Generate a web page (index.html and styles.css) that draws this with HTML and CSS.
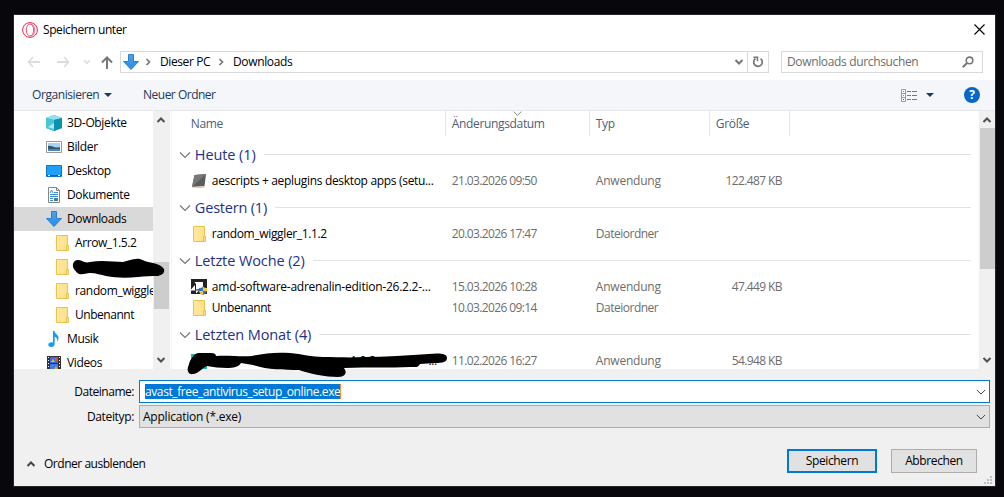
FILE: index.html
```html
<!DOCTYPE html>
<html lang="de">
<head>
<meta charset="utf-8">
<title>Speichern unter</title>
<link rel="stylesheet" href="styles.css">
</head>
<body>
<svg class="defs" width="0" height="0">
  <defs>
    <linearGradient id="arrowFill" x2="0" y2="1"><stop offset="0" stop-color="#4aa3ec"/><stop offset="1" stop-color="#2b8ce4"/></linearGradient>
    <linearGradient id="folderFill"><stop offset="0" stop-color="#ffe9a3"/><stop offset="1" stop-color="#ffdf82"/></linearGradient>
    <symbol id="folder" viewBox="0 0 16 16"><path d="M2.500.5h11v10h1v5h-12z" fill="url(#folderFill)" stroke="#ebc24d"/><path d="M12.500 15v-4.500h1.500" fill="none" stroke="#ebc24d"/></symbol>
    <symbol id="down" viewBox="0 0 16 16"><path d="M5.500.5h5v7h5L8 15.500.5 7.500h5z" fill="url(#arrowFill)" stroke="#2b7ed0"/></symbol>
    <symbol id="chev" viewBox="0 0 12 12"><path d="M1 3.500 6 8.500 11 3.500" fill="none" stroke="currentColor" stroke-width="1.200"/></symbol>
    <symbol id="boldchev" viewBox="0 0 10 10"><path d="M1.500 3 5 6.500 8.500 3" fill="none" stroke="currentColor" stroke-width="2"/></symbol>
  </defs>
</svg>
<div class="window">
  <header class="titlebar">
    <svg class="i16" viewBox="0 0 16 16" fill="none" stroke="#e9204f"><circle cx="8" cy="8" r="7.400" stroke-width="1"/><ellipse cx="8" cy="8" rx="3.700" ry="6" stroke-width=".8"/><path d="M9 2c5 1 5 11 0 12" stroke-width=".6"/></svg>
    <span class="title">Speichern unter</span>
    <svg class="close" viewBox="0 0 11 11"><path d="m.5.5 10 10m0-10-10 10" stroke="#000" stroke-width="1.100"/></svg>
  </header>

  <nav class="navbar">
    <div class="arrows">
      <svg width="13" height="12" viewBox="0 0 13 12"><path d="M6 1 1.500 6 6 11M1.500 6H13" fill="none" stroke="#ddd" stroke-width="1.800"/></svg>
      <svg width="13" height="12" viewBox="0 0 13 12"><path d="m7 1 4.500 5L7 11M11.500 6H0" fill="none" stroke="#ddd" stroke-width="1.800"/></svg>
      <svg class="recent" width="8" height="8" viewBox="0 0 10 10"><use href="#boldchev"/></svg>
      <svg width="12" height="13" viewBox="0 0 12 13"><path d="M1 6.500 6 1.500l5 5M6 1.500V13" fill="none" stroke="#777" stroke-width="2"/></svg>
    </div>
    <div class="address">
      <svg class="i16"><use href="#down"/></svg>
      <svg class="sep" viewBox="0 0 6 8"><path d="m1.500 1 3 3-3 3" fill="none" stroke="#777" stroke-width="1.700"/></svg>
      <span class="crumb pc">Dieser PC</span>
      <svg class="sep second" viewBox="0 0 6 8"><path d="m1.500 1 3 3-3 3" fill="none" stroke="#777" stroke-width="1.700"/></svg>
      <span class="crumb dl">Downloads</span>
      <svg class="drop" viewBox="0 0 10 10"><use href="#boldchev"/></svg>
      <span class="refresh"><svg width="12" height="12" viewBox="0 0 12 12"><path d="M8.600 2.600A4.300 4.300 0 1 1 3.500 2.500" fill="none" stroke="#777" stroke-width="1.700"/><path d="M1.500 1.200h4v4" fill="none" stroke="#777" stroke-width="1.500"/></svg></span>
    </div>
    <div class="search">
      <span class="hint">Downloads durchsuchen</span>
      <svg width="12" height="12" viewBox="0 0 12 12"><circle cx="7.500" cy="4.400" r="3.300" fill="none" stroke="#777" stroke-width="1.600"/><path d="M5.200 6.800.8 11.200" stroke="#777" stroke-width="2"/></svg>
    </div>
  </nav>

  <div class="toolbar">
    <span class="organize">Organisieren</span>
    <i class="tri"></i>
    <span class="newfolder">Neuer Ordner</span>
    <svg class="view" width="16" height="13" viewBox="0 0 16 13"><path d="M.5.500h4v12h-4zM.5 4.500h4m-4 4h4" fill="#fff" stroke="#999"/><path d="M6 2.500h4m1 0h5m-10 4h4m1 0h5m-10 4h4m1 0h5" stroke="#777"/><path d="M2 2h1v1H2z" fill="#777"/><path d="M2 6h1v1H2z" fill="#39f"/><path d="M2 10h1v1H2z" fill="#d22"/></svg>
    <i class="tri"></i>
    <span class="help">?</span>
  </div>

  <main class="content">
    <aside class="tree">
      <div class="node"><svg class="i16" viewBox="0 0 16 16"><path d="M0 3 8 0l8 3v10l-8 3-8-3z" fill="#2bb3c9"/><path d="m0 3 8-3 8 3-8 2z" fill="#8fe3ef"/><path d="M0 3l8 2v11l-8-3z" fill="#48c5d6"/><path d="m8 5 8-2v10l-8 3z" fill="#0c91b0"/><path d="m8 8-6 4 6 2z" fill="#a9edf4"/></svg><span>3D-Objekte</span></div>
      <div class="node"><svg class="i16" viewBox="0 0 16 16"><path d="M.5 2.500h15v11H.5z" fill="#fff" stroke="#999"/><path d="M2 4h12v8H2z" fill="#a7d2f3"/><path d="M2 7c4-1 6 3 12 1v4H2z" fill="#35566a"/><path d="M2 10h12v2H2z" fill="#4d86be"/></svg><span>Bilder</span></div>
      <div class="node"><svg class="i16" viewBox="0 0 16 16"><path d="M.5 2.500h15v11H.5z" fill="#1ca0fb" stroke="#0c76c4"/><path d="M1 12.500h14" stroke="#0b5e9d"/><path d="M2 12.500h2m8 0h2" stroke="#fff"/></svg><span>Desktop</span></div>
      <div class="node"><svg class="i16" viewBox="0 0 16 16"><path d="M2.500.5h8l3 3v12h-11z" fill="#fff" stroke="#858585"/><path d="M10.500.5v3h3" fill="none" stroke="#858585"/><path d="m4 6 1.500-3L7 6M8 5.500h4m-8 2h8m-8 2h8m-8 2h3m-3 2h3" fill="none" stroke="#398cce"/><path d="M8 11h4v3H8z" fill="#4d7b91"/></svg><span>Dokumente</span></div>
      <div class="node selected"><svg class="i16"><use href="#down"/></svg><span>Downloads</span></div>
      <div class="node child"><svg class="i16"><use href="#folder"/></svg><span class="arrow">Arrow_1.5.2</span></div>
      <div class="node child"><svg class="i16"><use href="#folder"/></svg></div>
      <div class="node child"><svg class="i16"><use href="#folder"/></svg><span>random_wiggler</span></div>
      <div class="node child"><svg class="i16"><use href="#folder"/></svg><span class="dense">Unbenannt</span></div>
      <div class="node"><svg class="i16" viewBox="0 0 16 16"><path d="M7 0h1.500c.3 3 4.500 3.700 4 7.500-.2 1.500-.8 2.200-1.500 3 .7-3-.7-4.300-2.300-4.700V13c0 1.700-1.500 3-3.300 3S2.300 15 2.300 13.700 4 11 5.600 11.200L7 11.500z" fill="#159df2"/></svg><span>Musik</span></div>
      <div class="node"><svg class="i16" viewBox="0 0 16 16"><path d="M1 1h14v15H1z" fill="#333"/><path d="M4 2h8v6H4z" fill="#3c6ae0"/><path d="M4 9h8v7H4z" fill="#3f7be8"/><path d="m5 7 2-3 2 3z" fill="#e6b432"/><path d="M9 3h2v3H9z" fill="#e05a38"/><path d="m8 15 2-4 2 4z" fill="#e6b432"/><path d="M2.500 2v14m11-14v14" stroke="#fff" stroke-dasharray="1 2"/></svg><span>Videos</span></div>
    </aside>
    <div class="scroll treescroll">
      <svg class="up" viewBox="0 0 10 10"><use href="#boldchev"/></svg><i class="thumb"></i><svg class="dn" viewBox="0 0 10 10"><use href="#boldchev"/></svg>
    </div>
    <section class="files">
      <div class="columns">
        <span class="c-name">Name</span>
        <span class="c-date">Änderungsdatum<svg class="sort" viewBox="0 0 12 12"><use href="#chev"/></svg></span>
        <span class="c-type">Typ</span>
        <span class="c-size">Größe</span>
      </div>
      <div class="group"><svg viewBox="0 0 12 12"><use href="#chev"/></svg><span>Heute (1)</span><i></i></div>
      <div class="row"><svg class="i16" viewBox="0 0 16 16"><path d="M3.500 2 15 1l-1.500 12L1 14z" fill="#5c5c5c"/><path d="M3.500 2 15 1 1 14z" fill="#777"/><path d="m1 14 11.500.3 1-2" fill="none" stroke="#d99c7d" stroke-width=".8"/></svg><span class="name f1">aescripts + aeplugins desktop apps (setu...</span><span class="date">21.03.2026 09:50</span><span class="type app">Anwendung</span><span class="size">122.487 KB</span></div>
      <div class="group"><svg viewBox="0 0 12 12"><use href="#chev"/></svg><span class="g2">Gestern (1)</span><i></i></div>
      <div class="row"><svg class="i16"><use href="#folder"/></svg><span class="name">random_wiggler_1.1.2</span><span class="date">20.03.2026 17:47</span><span class="type">Dateiordner</span></div>
      <div class="group"><svg viewBox="0 0 12 12"><use href="#chev"/></svg><span>Letzte Woche (2)</span><i></i></div>
      <div class="row"><svg class="i16" viewBox="0 0 16 16"><path d="M0 0h16v15H0z" fill="#222"/><path d="M3.500 3H12v7h-2L5 10.500V5z" fill="#fff"/><path d="M4 6v5.500h4L5.500 14H0v-3.500z" fill="#fff"/><path d="M0 11.500h5V15H0z" fill="#222"/><path d="M8 9c2 0 3-.5 4-1.500 1 1 2 1.500 4 1.500 0 4-1 6-4 7-3-1-4-3-4-7z" fill="#2b77d0"/><path d="M12 7.500c1 1 2 1.500 4 1.500v3h-4zM8 12h4v4c-2.500-.8-3.600-2-4-4z" fill="#ffc533"/></svg><span class="name f3">amd-software-adrenalin-edition-26.2.2-...</span><span class="date">15.03.2026 10:28</span><span class="type app">Anwendung</span><span class="size">47.449 KB</span></div>
      <div class="row"><svg class="i16"><use href="#folder"/></svg><span class="name dense">Unbenannt</span><span class="date">10.03.2026 09:14</span><span class="type">Dateiordner</span></div>
      <div class="group"><svg viewBox="0 0 12 12"><use href="#chev"/></svg><span>Letzten Monat (4)</span><i></i></div>
      <div class="row"><svg class="i16" viewBox="0 0 16 16"><path d="M0 1h16v15H0z" fill="#26b3ac"/></svg><span class="name tail"><b>1.0.2</b><b>...</b></span><span class="date">11.02.2026 16:27</span><span class="type app">Anwendung</span><span class="size">54.948 KB</span></div>
    </section>
    <div class="scroll filescroll">
      <svg class="up" viewBox="0 0 10 10"><use href="#boldchev"/></svg><i class="thumb"></i><svg class="dn" viewBox="0 0 10 10"><use href="#boldchev"/></svg>
    </div>
  </main>

  <footer class="form">
    <div class="field"><label class="dense">Dateiname:</label><div class="box input"><span class="sel">avast_free_antivirus_setup_online.exe</span><svg viewBox="0 0 12 12"><use href="#chev"/></svg></div></div>
    <div class="field"><label>Dateityp:</label><div class="box select"><span class="filetype">Application (*.exe)</span><svg viewBox="0 0 12 12"><use href="#chev"/></svg></div></div>
    <div class="actions">
      <svg class="up" width="10" height="10" viewBox="0 0 10 10"><use href="#boldchev"/></svg>
      <span class="hide dense">Ordner ausblenden</span>
      <button class="save">Speichern</button>
      <button class="cancel">Abbrechen</button>
    </div>
  </footer>
  <svg class="grip" viewBox="0 0 8 8" fill="#bfbfbf"><path d="M6 0h2v2H6zM3 3h2v2H3zM6 3h2v2H6zM0 6h2v2H0zM3 6h2v2H3zM6 6h2v2H6z"/></svg>
</div>
<svg class="marker" viewBox="0 0 1004 497">
  <path d="M73 264c1-4 5-5 9-3 2 1 5 2 8 1 12-2 24 0 33 0 6-1 10-4 17-3 4 2 8 3 13 4 5 1 9 3 11 6 1 4-2 6-6 7-7 0-13 0-20 1-11 1-22 1-32-1-5-1-10-3-16-3-4 0-7 2-11 1-3-2-7-6-6-10z"/>
  <path d="M190 361c3-4 4-8 9-8h12c3 0 5 1 5 3 12-1 25 1 36 0 12-3 25-4 38-3 12 1 22 4 33 4 14 0 27 1 41 0 22 0 44-2 65-3 9-1 18-1 18 4 0 4-4 5-12 5l-15 1c-2 4-4 3-10 3-20 1-40 0-66 1 4 6 0 9-6 9-13 0-27-3-39-7-15 0-32 0-46-5l-12-2c-2 4-8 5-14 5-7 0-14-1-20-2-5 2-9 8-14 8-5 1-6-4-5-7 1-2 1-4 2-6z"/>
</svg>
</body>
</html>
```
FILE: styles.css
```css
* { box-sizing: border-box; }
body { margin: 0; width: 1004px; height: 497px; padding: 15px 9px 11px 14px; background: #08070c; overflow: hidden; font: 12px/16px "Open Sans", "Noto Sans", sans-serif; letter-spacing: -.35px; color: #000; position: relative; }
svg { display: block; flex: none; }
b { font-weight: 400; }
span { white-space: nowrap; }
.defs { position: absolute; }
.i16 { width: 16px; height: 16px; }
.dense { letter-spacing: -.47px; }
.arrow { letter-spacing: -.42px; }
.window { width: 981px; height: 471px; background: #fff; display: flex; flex-direction: column; position: relative; box-shadow: 0 0 0 1px #252528; }
.titlebar { height: 29px; display: flex; align-items: center; padding: 0 10px 0 8px; }
.title { margin-left: 5px; letter-spacing: -.4px; }
.close { width: 11px; height: 11px; margin-left: auto; }
.navbar { height: 36px; padding: 7px 12px 7px 13px; display: flex; align-items: center; }
.arrows { width: 93px; display: flex; align-items: center; color: #ddd; }
.arrows svg:nth-child(2) { margin-left: 17px; }
.arrows .recent { margin-left: 13px; }
.arrows svg:nth-child(4) { margin-left: 10px; }
.address { width: 649px; height: 22px; border: 1px solid #d9d9d9; display: flex; align-items: center; padding-left: 2px; }
.sep { width: 6px; height: 8px; margin-left: 6px; }
.crumb.pc { margin-left: 9px; width: 50px; letter-spacing: -.4px; }
.sep.second { margin-left: 8px; }
.crumb.dl { margin-left: 9px; }
.drop { width: 10px; height: 10px; margin-left: auto; color: #777; }
.refresh { width: 21px; height: 20px; border-left: 1px solid #d9d9d9; display: grid; place-items: center; margin-left: 3px; }
.search { margin-left: 12px; width: 202px; height: 22px; border: 1px solid #d9d9d9; padding: 0 8px 0 5px; display: flex; justify-content: space-between; align-items: center; color: #6d6d6d; }
.toolbar { height: 31px; background: #f4f6f9; border-bottom: 1px solid #e5e7ea; color: #1e395b; display: flex; align-items: center; padding: 0 15px 0 18px; }
.organize { width: 67px; letter-spacing: -.42px; }
.tri { border: 4px solid transparent; border-top-color: #1e395b; border-bottom: 0; margin-left: 5px; }
.newfolder { margin-left: 31px; letter-spacing: -.5px; }
.view { margin-left: auto; }
.view + .tri { margin-left: 9px; }
.help { width: 16px; height: 16px; border-radius: 50%; background: #0868c8; color: #fff; font-weight: 700; text-align: center; line-height: 16px; margin-left: 30px; }
.content { height: 258px; display: flex; overflow: hidden; }
.tree { width: 139px; overflow: hidden; }
.node { height: 24px; padding-left: 32px; display: flex; align-items: center; gap: 5px; }
.node.child { padding-left: 40px; }
.node.selected { background: #d9d9d9; }
.scroll { background: #f0f0f0; display: flex; flex-direction: column; align-items: center; color: #505050; padding: 4px 0; width: 17px; }
.scroll svg { width: 10px; height: 10px; }
.up { transform: scaleY(-1); }
.thumb { width: 15px; background: #cdcdcd; }
.scroll .dn { margin-top: auto; }
.treescroll .thumb { height: 47px; margin-top: 137px; }
.filescroll .thumb { height: 141px; margin-top: 3px; }
.filescroll { width: 16px; }
.files { width: 809px; padding-left: 10px; border-left: 1px solid #f5f5f5; margin-left: 1px; }
.columns { display: flex; height: 27px; color: #4c607a; }
.columns span { height: 25px; padding: 5px 0 0 6px; border-right: 1px solid #e5e5e5; position: relative; }
.columns .c-name { width: 264px; padding-left: 9px; }
.c-date { width: 144px; }
.c-type { width: 120px; }
.c-size { width: 80px; }
.sort { position: absolute; width: 9px; height: 9px; left: 67px; top: -2px; color: #777; }
.group { height: 32px; display: flex; align-items: center; padding-top: 1px; font-size: 14.500px; letter-spacing: -.1px; color: #1e3287; padding-right: 8px; margin-left: -3px; }
.group svg { width: 12px; height: 12px; color: #777; margin-right: 4px; }
.group i { flex: 1; height: 1px; background: #e2e2e2; margin-left: 8px; }
.g2 { letter-spacing: -.2px; }
.row { height: 21px; display: flex; align-items: center; padding-left: 9px; color: #6d6d6d; }
.name { width: 240px; margin-left: 5px; color: #000; }
.f1 { letter-spacing: -.32px; }
.f3 { letter-spacing: -.24px; }
.date { width: 144px; letter-spacing: -.62px; }
.type { width: 96px; letter-spacing: -.5px; }
.app { letter-spacing: -.22px; }
.size { width: 90px; text-align: right; letter-spacing: -.62px; }
.tail { display: flex; justify-content: flex-end; gap: 53px; padding-right: 15px; }
.form { flex: 1; background: #f0f0f0; padding-top: 11px; }
.field { display: flex; align-items: center; height: 23px; margin-bottom: 2px; padding-right: 5px; }
.field label { width: 120px; text-align: right; margin-right: 5px; }
.box { flex: 1; height: 23px; border: 1px solid #adadad; background: #e1e1e1; display: flex; align-items: center; justify-content: space-between; padding: 0 3px; color: #000; }
.box svg { width: 10px; height: 10px; color: #444; }
.filetype { letter-spacing: -.22px; }
.input { border-color: #0078d7; background: #fff; padding-left: 5px; }
.sel { background: #0078d7; color: #fff; height: 15px; line-height: 15px; letter-spacing: -.4px; border-right: 1px solid #ff8728; }
.actions { display: flex; align-items: center; padding: 0 18px 0 12px; margin-top: 19px; height: 28px; color: #000; }
.actions .hide { margin: 5px auto 0 8px; }
.actions > svg { margin-top: 5px; color: #444; }
button { font: inherit; letter-spacing: -.38px; color: #000; height: 24px; padding: 0; border: 1px solid #adadad; background: #e1e1e1; line-height: 20px; }
.save { width: 90px; border: 2px solid #0078d7; }
.cancel { width: 86px; margin-left: 14px; }
.grip { position: absolute; width: 8px; height: 8px; right: 3px; bottom: 2px; }
.marker { position: absolute; left: 0; top: 0; width: 1004px; height: 497px; pointer-events: none; fill: #000; }
```
